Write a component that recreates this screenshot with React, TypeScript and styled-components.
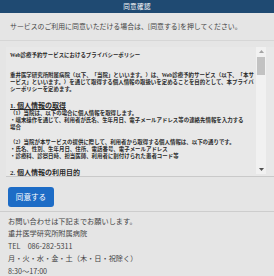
import { createGlobalStyle, styled } from 'styled-components';

const GlobalStyle = createGlobalStyle`
  html, body {
    margin: 0;
    padding: 0;
    background: #e5e5e5;
  }
  body {
    font-family: "Noto Sans CJK JP", "Noto Sans", sans-serif;
    color: #3a3a3a;
  }
`;

const Page = styled.div`
  width: 274px;
  height: 276px;
  overflow: hidden;
  display: flex;
  flex-direction: column;
`;

const Header = styled.div`
  height: 13px;
  background: #1f4a72;
  color: #ffffff;
  font-size: 6.6px;
  line-height: 13px;
  text-align: center;
  letter-spacing: 0.3px;
`;

const Lead = styled.p`
  margin: 0;
  height: 27px;
  padding-left: 10px;
  font-size: 6.9px;
  line-height: 27px;
  color: #444444;
  white-space: nowrap;
  border-bottom: 1px solid #d6d6d6;
`;

const PolicyFrame = styled.div`
  display: flex;
  margin: 6px 0 0 6px;
  padding-right: 8px;
  height: 129px;
  border-bottom: 1px solid #c9c9c9;
  background: #e8e8e8;
`;

const PolicyBody = styled.div`
  flex: 1;
  overflow: hidden;
  padding: 5px 0 0 4px;
  font-family: "Liberation Serif", "Noto Sans CJK JP", serif;
  font-size: 5.45px;
  line-height: 7px;
  font-weight: 700;
  color: #2a2a2a;
  white-space: nowrap;
`;

const Para = styled.p<{ $gap?: number }>`
  margin: ${(p) => p.$gap ?? 0}px 0 0;
`;

const Heading = styled.h3<{ $gap?: number }>`
  margin: ${(p) => p.$gap ?? 0}px 0 0;
  font-size: 7px;
  line-height: 8px;
  font-weight: 700;
  text-decoration: underline;
  color: #2a2a2a;
`;

const Scrollbar = styled.div`
  width: 10px;
  display: flex;
  flex-direction: column;
  background: #f1f1f1;
  margin-bottom: 2px;
`;

const Arrow = styled.div`
  height: 9px;
  display: flex;
  align-items: center;
  justify-content: center;
`;

const Track = styled.div`
  flex: 1;
  padding: 1px;
`;

const Thumb = styled.div`
  height: 18px;
  background: #c2c2c2;
`;

const Actions = styled.div`
  padding: 4px 8px;
  border-bottom: 1px solid #cdcdcd;
`;

const AgreeButton = styled.button`
  width: 46px;
  height: 20px;
  border: none;
  border-radius: 3px;
  background: #1d6cc6;
  color: #ffffff;
  font-family: "Noto Sans CJK JP", sans-serif;
  font-size: 7.6px;
  padding: 0;
  cursor: pointer;
`;

const Contact = styled.div`
  padding: 3px 8px 0;
  font-size: 7.2px;
  line-height: 12.5px;
  color: #444444;
  white-space: nowrap;
`;

function Tri({ down }: { down?: boolean }) {
  return (
    <svg width="5" height="3" viewBox="0 0 5 3">
      <polygon
        points={down ? '0,0 5,0 2.5,3' : '0,3 5,3 2.5,0'}
        fill={down ? '#505050' : '#a3a3a3'}
      />
    </svg>
  );
}

export default function App() {
  return (
    <>
      <GlobalStyle />
      <Page>
        <Header>同意確認</Header>
        <Lead>
          サービスのご利用に同意いただける場合は、[同意する]を押してください。
        </Lead>

        <PolicyFrame>
          <PolicyBody>
            <Para>Web診療予約サービスにおけるプライバシーポリシー</Para>
            <Para $gap={13}>
              重井医学研究所附属病院（以下、「当院」といいます。）は、Web診療予約サービス（以下、「本サ
              <br />
              ービス」といいます。）を通じて取得する個人情報の取扱いを定めることを目的として、本プライバ
              <br />
              シーポリシーを定めます。
            </Para>

            <Heading $gap={9}>1. 個人情報の取得</Heading>
            <Para>（1）当院は、以下の場合に個人情報を取得します。</Para>
            <Para>
              ・端末操作を通じて、利用者が氏名、生年月日、電子メールアドレス等の連絡先情報を入力する
              <br />
              場合
            </Para>
            <Para $gap={8}>
              （2）当院が本サービスの提供に際して、利用者から取得する個人情報は、以下の通りです。
            </Para>
            <Para>・氏名、性別、生年月日、住所、電話番号、電子メールアドレス</Para>
            <Para>・診療科、診察日時、担当医師、利用者に割付けられた患者コード等</Para>

            <Heading $gap={9}>2. 個人情報の利用目的</Heading>
          </PolicyBody>
          <Scrollbar>
            <Arrow>
              <Tri />
            </Arrow>
            <Track>
              <Thumb />
            </Track>
            <Arrow>
              <Tri down />
            </Arrow>
          </Scrollbar>
        </PolicyFrame>

        <Actions>
          <AgreeButton>同意する</AgreeButton>
        </Actions>

        <Contact>
          <div>お問い合わせは下記までお願いします。</div>
          <div>重井医学研究所附属病院</div>
          <div>TEL　086-282-5311</div>
          <div>月・火・水・金・土（木・日・祝除く）</div>
          <div>8:30〜17:00</div>
        </Contact>
      </Page>
    </>
  );
}
